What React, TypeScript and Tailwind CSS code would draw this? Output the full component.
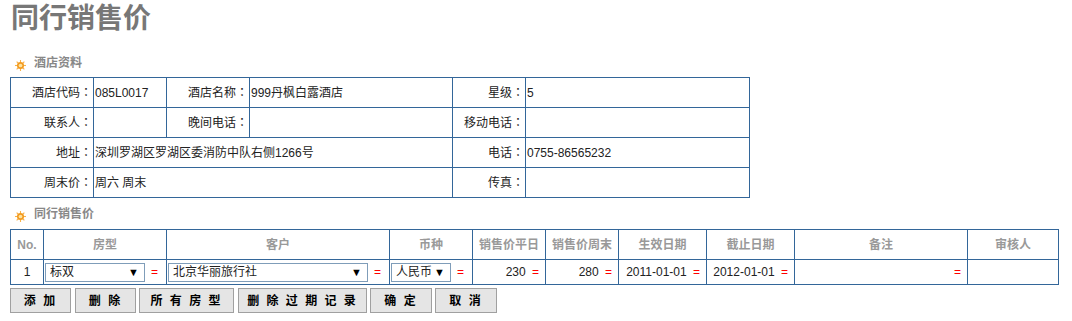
const font = { fontFamily: '"Liberation Sans", "Noto Sans CJK SC", sans-serif' };
const colonFont = { fontFamily: '"Noto Sans CJK TC", sans-serif' };

const SunIcon = () => (
  <svg width="11" height="11" viewBox="0 0 10 10" className="shrink-0">
    <g stroke="#f7b24a" strokeWidth="1">
      <line x1="5" y1="0" x2="5" y2="10" />
      <line x1="0" y1="5" x2="10" y2="5" />
      <line x1="1.5" y1="1.5" x2="8.5" y2="8.5" />
      <line x1="8.5" y1="1.5" x2="1.5" y2="8.5" />
    </g>
    <circle cx="5" cy="5" r="3.2" fill="#f39a1e" />
    <circle cx="5" cy="5" r="1.7" fill="#fde3a0" />
  </svg>
);

const SectionTitle = ({ title }: { title: string }) => (
  <div className="flex h-[20px] items-center gap-[8px] pl-[15px]">
    <div className="mt-[5px]">
      <SunIcon />
    </div>
    <span className="text-[12px] font-bold text-[#888]">{title}</span>
  </div>
);

const Label: React.FC<{ text: string }> = ({ text }) => (
  <td className="border border-[#336699] pr-[1px] text-right align-middle">
    {text}
    <span style={colonFont}>：</span>
  </td>
);

const Value: React.FC<{ children?: React.ReactNode; colSpan?: number }> = ({ children, colSpan }) => (
  <td colSpan={colSpan} className="border border-[#336699] pl-[1px] align-middle">
    {children}
  </td>
);

const Select: React.FC<{ text: string; width: string }> = ({ text, width }) => (
  <div
    className={`flex h-[19px] items-center justify-between border border-[#7f9db9] bg-white pl-[4px] pr-[5px] ${width}`}
  >
    <span>{text}</span>
    <span className="text-[11px] text-black">▼</span>
  </div>
);

const Eq = () => <span className="text-[#ff0000]">=</span>;

const Button: React.FC<{ text: string; width: string }> = ({ text, width }) => (
  <button
    className={`h-[25px] border border-[#a0a0a0] bg-[#e5e5e5] text-[12px] font-bold tracking-[2px] text-black ${width}`}
  >
    {text}
  </button>
);

const headers = [
  { t: 'No.', w: 'w-[33px]' },
  { t: '房型', w: 'w-[123px]' },
  { t: '客户', w: 'w-[223px]' },
  { t: '币种', w: 'w-[83px]' },
  { t: '销售价平日', w: 'w-[73px]' },
  { t: '销售价周末', w: 'w-[73px]' },
  { t: '生效日期', w: 'w-[88px]' },
  { t: '截止日期', w: 'w-[88px]' },
  { t: '备注', w: 'w-[173px]' },
  { t: '审核人', w: 'w-[91px]' },
];

export default function App() {
  return (
    <div className="h-[321px] w-[1072px] bg-white text-[12px] text-[#222]" style={font}>
      <h1 className="h-[42px] pl-[11px] pt-[1px] text-[28px] font-bold leading-[36px] text-[#777]">
        同行销售价
      </h1>

      <div className="mt-[11px]">
        <SectionTitle title="酒店资料" />
      </div>

      <table className="ml-[10px] mt-[4px] w-[739px] table-fixed border-collapse">
        <colgroup>
          <col className="w-[83px]" />
          <col className="w-[73px]" />
          <col className="w-[83px]" />
          <col className="w-[203px]" />
          <col className="w-[73px]" />
          <col className="w-[224px]" />
        </colgroup>
        <tbody>
          <tr className="h-[30px]">
            <Label text="酒店代码" />
            <Value>085L0017</Value>
            <Label text="酒店名称" />
            <Value>999丹枫白露酒店</Value>
            <Label text="星级" />
            <Value>5</Value>
          </tr>
          <tr className="h-[30px]">
            <Label text="联系人" />
            <Value />
            <Label text="晚间电话" />
            <Value />
            <Label text="移动电话" />
            <Value />
          </tr>
          <tr className="h-[30px]">
            <Label text="地址" />
            <Value colSpan={3}>深圳罗湖区罗湖区委消防中队右侧1266号</Value>
            <Label text="电话" />
            <Value>0755-86565232</Value>
          </tr>
          <tr className="h-[30px]">
            <Label text="周末价" />
            <Value colSpan={3}>周六 周末</Value>
            <Label text="传真" />
            <Value />
          </tr>
        </tbody>
      </table>

      <div className="mt-[6px]">
        <SectionTitle title="同行销售价" />
      </div>

      <table className="ml-[10px] mt-[5px] w-[1049px] table-fixed border-collapse">
        <colgroup>
          {headers.map((h) => (
            <col key={h.t} className={h.w} />
          ))}
        </colgroup>
        <thead>
          <tr className="h-[30px]">
            {headers.map((h) => (
              <th key={h.t} className="border border-[#336699] text-center font-bold text-[#999]">
                {h.t}
              </th>
            ))}
          </tr>
        </thead>
        <tbody>
          <tr className="h-[25px]">
            <td className="border border-[#336699] text-center">1</td>
            <td className="border border-[#336699] pl-[1px]">
              <div className="flex items-center gap-[6px]">
                <Select text="标双" width="w-[100px]" />
                <Eq />
              </div>
            </td>
            <td className="border border-[#336699] pl-[1px]">
              <div className="flex items-center gap-[6px]">
                <Select text="北京华丽旅行社" width="w-[200px]" />
                <Eq />
              </div>
            </td>
            <td className="border border-[#336699] pl-[1px]">
              <div className="flex items-center gap-[6px]">
                <Select text="人民币" width="w-[60px]" />
                <Eq />
              </div>
            </td>
            <td className="border border-[#336699] pr-[6px] text-right">
              230 <span className="ml-[3px]"><Eq /></span>
            </td>
            <td className="border border-[#336699] pr-[6px] text-right">
              280 <span className="ml-[3px]"><Eq /></span>
            </td>
            <td className="border border-[#336699] pr-[6px] text-right">
              2011-01-01 <span className="ml-[3px]"><Eq /></span>
            </td>
            <td className="border border-[#336699] pr-[6px] text-right">
              2012-01-01 <span className="ml-[3px]"><Eq /></span>
            </td>
            <td className="border border-[#336699] pr-[6px] text-right">
              <Eq />
            </td>
            <td className="border border-[#336699]" />
          </tr>
        </tbody>
      </table>

      <div className="ml-[10px] mt-[3px] flex">
        <Button text="添 加" width="w-[61px]" />
        <div className="ml-[4px]"><Button text="删 除" width="w-[61px]" /></div>
        <div className="ml-[3px]"><Button text="所 有 房 型" width="w-[95px]" /></div>
        <div className="ml-[4px]"><Button text="删 除 过 期 记 录" width="w-[129px]" /></div>
        <div className="ml-[3px]"><Button text="确 定" width="w-[62px]" /></div>
        <div className="ml-[3px]"><Button text="取 消" width="w-[62px]" /></div>
      </div>
    </div>
  );
}
